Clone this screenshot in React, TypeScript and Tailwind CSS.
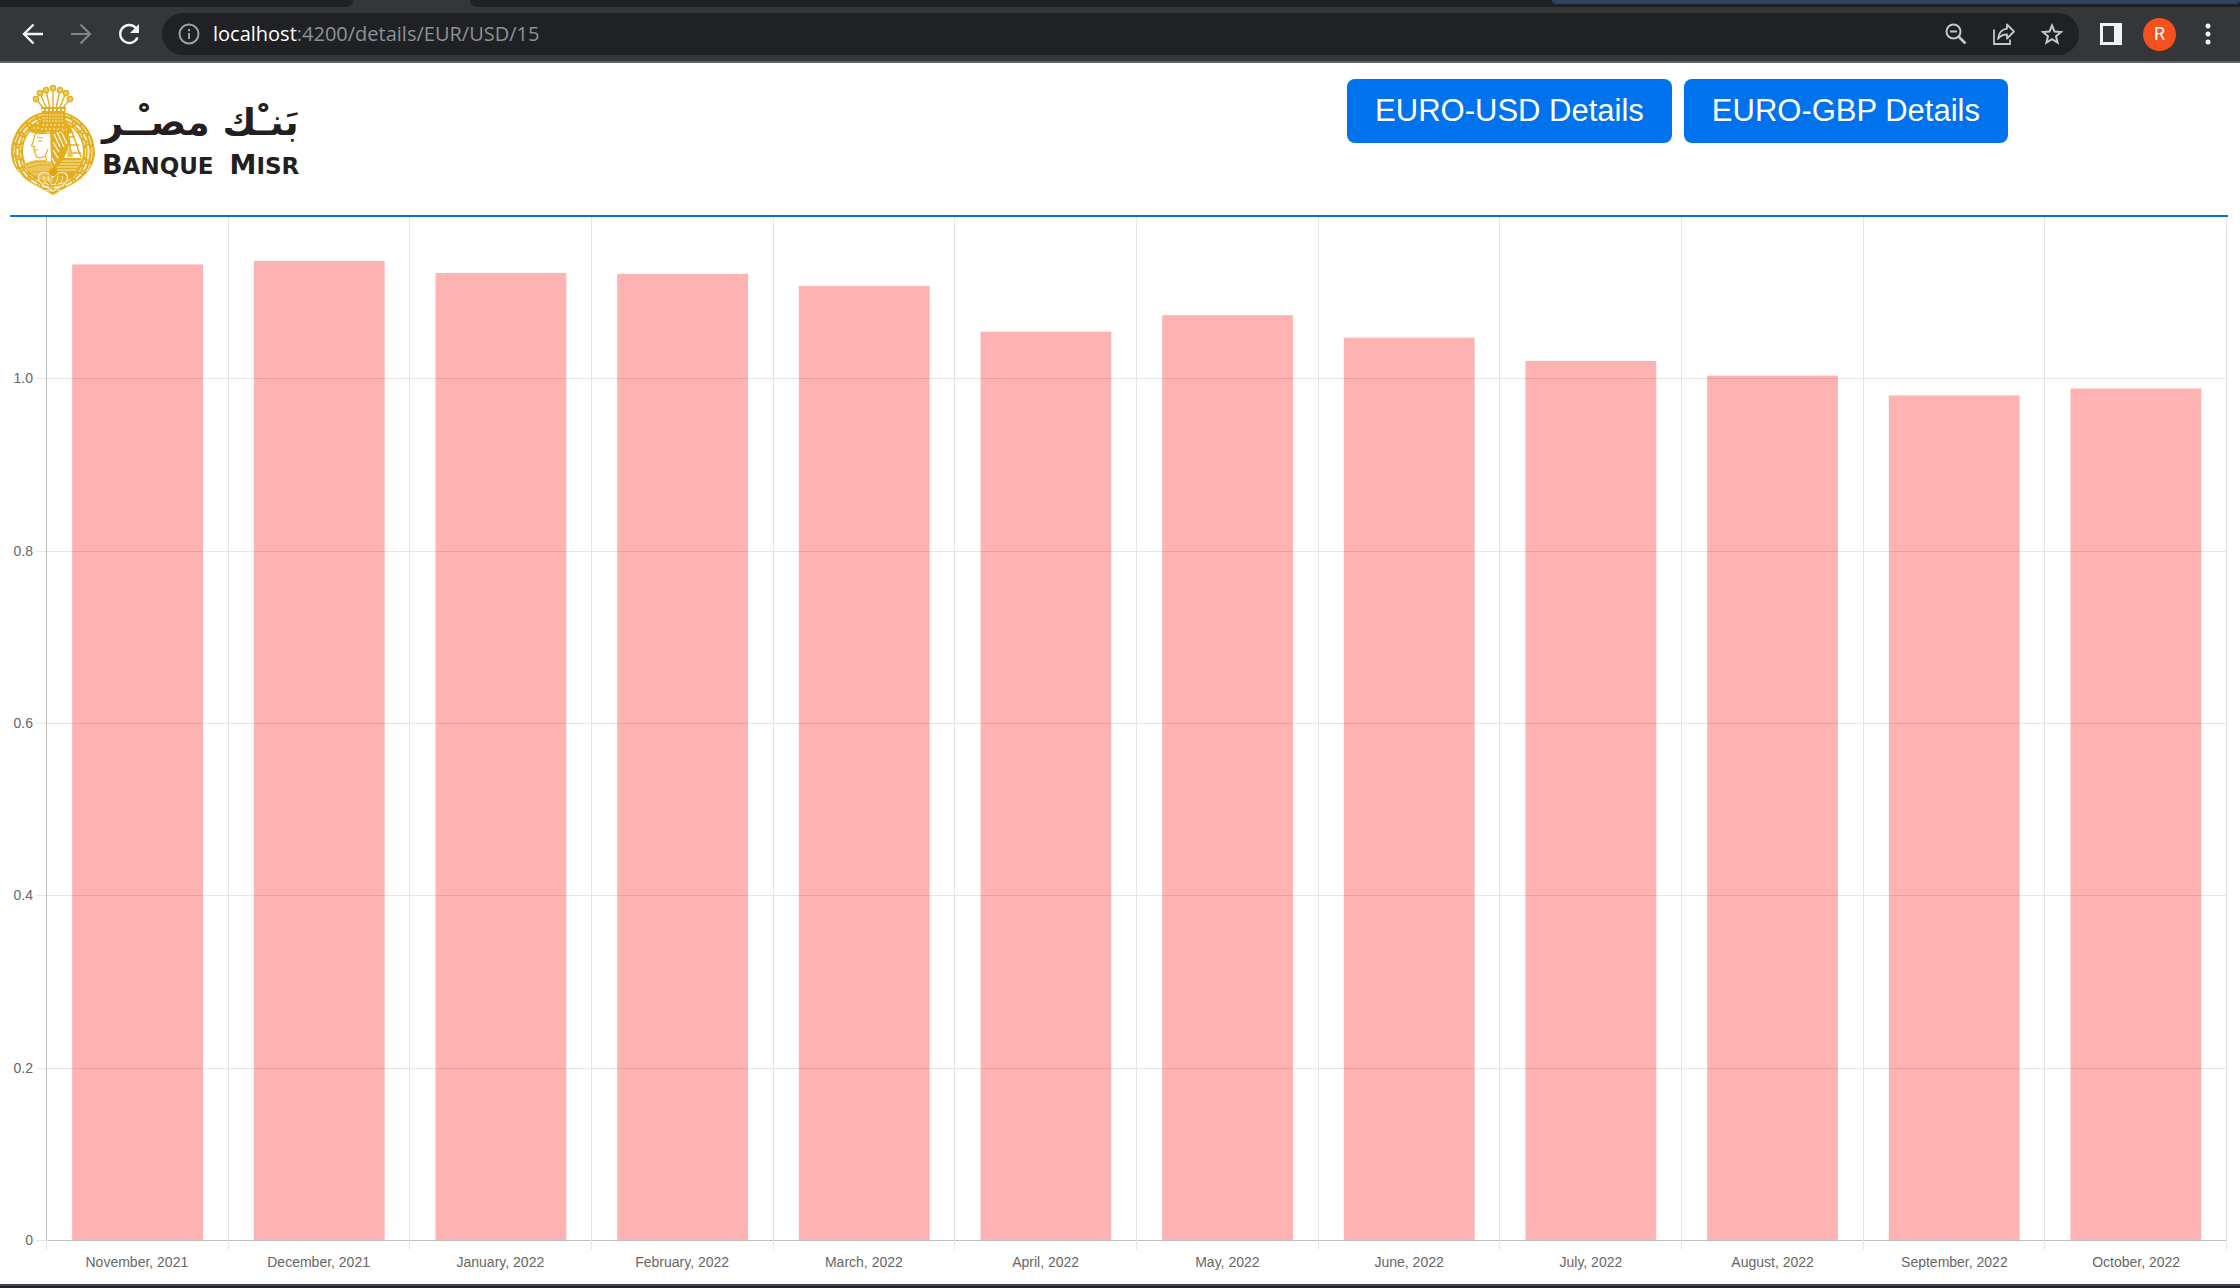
import { ReactNode } from "react";

const rates = [
  { month: "November, 2021", value: 1.132 },
  { month: "December, 2021", value: 1.136 },
  { month: "January, 2022", value: 1.122 },
  { month: "February, 2022", value: 1.121 },
  { month: "March, 2022", value: 1.107 },
  { month: "April, 2022", value: 1.054 },
  { month: "May, 2022", value: 1.073 },
  { month: "June, 2022", value: 1.047 },
  { month: "July, 2022", value: 1.02 },
  { month: "August, 2022", value: 1.003 },
  { month: "September, 2022", value: 0.98 },
  { month: "October, 2022", value: 0.988 },
];

const ticks = ["0", "0.2", "0.4", "0.6", "0.8", "1.0"];
const MAX = 1.187;
const SLOT = 100 / rates.length;

const yOf = (v: number) => `${(1 - v / MAX) * 100}%`;

function IconButton({ label, children }: { label: string; children: ReactNode }) {
  return (
    <button type="button" aria-label={label} className="flex h-8 w-8 shrink-0 items-center justify-center">
      {children}
    </button>
  );
}

function TabStrip() {
  return (
    <div className="flex h-[7px] bg-[#35363a]">
      <div className="w-[353px] rounded-br-lg bg-[#202124]" />
      <div className="w-[117px]" />
      <div className="flex flex-1 justify-end rounded-bl-lg bg-[#202124]">
        <div className="h-1 w-[688px] rounded-b bg-[#2c4361]" />
      </div>
    </div>
  );
}

function Toolbar() {
  return (
    <div className="flex h-14 items-center border-b-2 border-[#5f6064] bg-[#35363a] pl-[17px] pr-4">
      <div className="flex gap-4">
        <IconButton label="Back">
          <svg width="22" height="22" viewBox="0 0 22 22" fill="none" stroke="#f1f3f4" strokeWidth="2.4">
            <path d="M21 11H2.5M11.5 1.5 2 11l9.500 9.500" />
          </svg>
        </IconButton>
        <IconButton label="Forward">
          <svg width="22" height="22" viewBox="0 0 22 22" fill="none" stroke="#828387" strokeWidth="2.200">
            <path d="M1 11h18.500M10.500 1.500 20 11l-9.500 9.500" />
          </svg>
        </IconButton>
        <IconButton label="Reload">
          <svg width="24" height="24" viewBox="0 0 24 24" fill="none">
            <path d="M20.500 15.500A9 9 0 1 1 19 6" stroke="#f1f3f4" strokeWidth="2.400" />
            <path d="M22 2v9h-9z" fill="#f1f3f4" />
          </svg>
        </IconButton>
      </div>
      <div className="ml-[17px] flex h-[42px] flex-1 items-center rounded-full bg-[#202124] pl-4 pr-[11px]">
        <svg width="22" height="22" viewBox="0 0 22 22" fill="none" stroke="#9aa0a6" strokeWidth="2" className="shrink-0">
          <circle cx="11" cy="11" r="9.500" />
          <path d="M11 10v6M11 6v2.200" />
        </svg>
        <div className="ml-[13px] flex-1 font-['Open_Sans','Noto_Sans',sans-serif] text-[20px] leading-7 text-[#8d9195]">
          <span className="text-white">localhost</span>:4200/details/EUR/USD/15
        </div>
        <div className="flex gap-4">
          <IconButton label="Zoom">
            <svg width="22" height="22" viewBox="0 0 22 22" fill="none" stroke="#c4c6c8" strokeWidth="2">
              <circle cx="8.500" cy="8.500" r="7" />
              <path d="M5 8.500h7" />
              <path d="m13.500 13.500 7 7" strokeWidth="2.600" />
            </svg>
          </IconButton>
          <IconButton label="Share">
            <svg width="24" height="24" viewBox="0 0 24 24" fill="none" stroke="#c4c6c8" strokeWidth="1.800">
              <path d="M2 7.500V22h16v-4.500" />
              <path d="M15 2.500 22 9.500l-7 7v-4c-4 0-7 1.300-9 4.500.5-5.500 3.500-9.500 9-10.300z" strokeLinejoin="round" />
            </svg>
          </IconButton>
          <IconButton label="Bookmark">
            <svg width="24" height="24" viewBox="0 0 24 24" fill="none" stroke="#c4c6c8" strokeWidth="2">
              <path d="m12 3.500 2.500 6 6.500.6-5 4.200 1.600 6.400-5.600-3.500-5.600 3.500L8 14.300l-5-4.200 6.500-.6z" />
            </svg>
          </IconButton>
        </div>
      </div>
      <div className="ml-4 flex gap-4">
        <IconButton label="Side panel">
          <svg width="22" height="22" viewBox="0 0 22 22">
            <path d="M0 0h22v22H0zM3 3v16h11V3z" fill="#f1f3f4" fillRule="evenodd" />
          </svg>
        </IconButton>
        <button type="button" aria-label="Profile" className="flex h-[33px] w-[33px] items-center justify-center rounded-full bg-[#f4511e] font-['Roboto',sans-serif] text-lg leading-none text-white">
          R
        </button>
        <IconButton label="Menu">
          <svg width="6" height="22" viewBox="0 0 6 22" fill="#f1f3f4">
            <circle cx="3" cy="3" r="2.500" />
            <circle cx="3" cy="11" r="2.500" />
            <circle cx="3" cy="19" r="2.500" />
          </svg>
        </IconButton>
      </div>
    </div>
  );
}

const stalks = [
  [25, 14, 33, 24],
  [29, 8, 36, 24],
  [35, 5, 39, 24],
  [42, 3, 42, 24],
  [49, 5, 45, 24],
  [55, 8, 48, 24],
  [59, 14, 51, 24],
];

function Emblem() {
  return (
    <svg width="84" height="110" viewBox="0 0 84 110" className="shrink-0" fill="none" stroke="#e3ae1f">
      {stalks.map(([x, y, bx, by]) => (
        <g key={x}>
          <path d={`M${x} ${y}L${bx} ${by}`} strokeWidth="1.400" />
          <circle cx={x} cy={y} r="2.700" fill="#edcb6b" strokeWidth="1.300" />
        </g>
      ))}
      <path d="M42 27C62 24 84 42 84 68C83 84 72 94 58 101L42 110L26 101C12 94 1 84 0 68C0 42 22 24 42 27Z" fill="#e3ae1f" stroke="none" />
      <circle cx="42" cy="67" r="39" stroke="#fbf0cf" strokeWidth="1" strokeDasharray="9 3" />
      <circle cx="42" cy="67" r="35.500" stroke="#fbf0cf" strokeWidth="2" strokeDasharray="7 2 1 2" />
      <circle cx="42" cy="67" r="32.500" stroke="#fbf0cf" strokeWidth="1" strokeDasharray="5 3" />
      <circle cx="42" cy="66" r="30" fill="#fff" stroke="none" />
      <path d="M24 49q-1 5-1.500 7L20.500 61l3 1-.5 2.500 1 1.200-.8 1.300 1.500 2q0 3 2 3.500 4 .5 8-1.500l1 6h5V48z" fill="#fff" strokeWidth="1.200" />
      <path d="M26 53q3-1.500 6 0M27 56h4M24 65h3M34 70q2-2 3-6" strokeWidth="1.100" />
      <path d="M13 79q12-6 21-4l4 2h4v20Q20 94 13 79z" fill="#ecc75c" stroke="none" />
      <path d="M15 80q10-5 20-3M17 83q10-4 24-3M20 87h21M24 91h17" strokeWidth="1" />
      <path d="M42 73h28q1 4-2 8-7 14-26 16z" fill="#e3ae1f" stroke="none" />
      <path d="M44 76h26M44 79h25M44 82h23M46 85h19" stroke="#f7e6b5" strokeWidth="1" />
      <path d="M39 42h14q5 6 6 15-4 18-16 28l-3-9z" fill="#e3ae1f" stroke="none" />
      <path d="M43 49l6 13M46 47l7 15M50 46l6 13M42 57l6 10M42 65l5 8M41 73l3 6" stroke="#fff" strokeWidth="1.200" />
      <path d="M56 44l5 28M60 44l10 28M58 60h10M60 68h10M57 52h7" strokeWidth="1.500" />
      <path d="M58 60l4 12h-6z" fill="#ecc75c" stroke="none" />
      <path d="M18 43q3-4 9-4l4-5h22l7 8 1 6-6 2q-9-6-18-3-8 3-15 1-5-1-4-5z" fill="#e3ae1f" stroke="none" />
      <path d="M22 43h7M31 40h22M30 44h24M48 48l8-4" stroke="#fbf0cf" strokeWidth="1" strokeDasharray="2 2" />
      <path d="M30 22h25l-2 15H32z" fill="#e3ae1f" stroke="none" />
      <path d="M31 25h23" stroke="#fff" strokeWidth="2" strokeDasharray="2 2" />
      <path d="M32 30h21M32 33h21M32 36h21" stroke="#f7e6b5" strokeWidth="1" strokeDasharray="2 1" />
      <path d="M30 88q-6 5 2 12l10 6 10-6q8-7 2-12-6-2-12 4-6-6-12-4z" stroke="#fbf0cf" strokeWidth="1.200" />
      <path d="M33 91q-2 5 5 9M51 91q2 5-5 9M37 91q0 5 4 9M47 91q0 5-4 9" stroke="#fbf0cf" strokeWidth="1" />
      <circle cx="42" cy="87" r="4" fill="#dca514" stroke="none" />
    </svg>
  );
}

function Logo() {
  return (
    <a href="#home" aria-label="Banque Misr" className="flex items-start gap-[7px]">
      <Emblem />
      <div className="flex flex-col pt-2 font-['DejaVu_Sans',sans-serif] font-bold text-[#231f20]">
        <div lang="ar" dir="rtl" className="h-14 self-start whitespace-nowrap text-[37px] leading-[60px]">
          بَنـْك مصـْـر
        </div>
        <div className="flex items-baseline gap-4 text-[23px] leading-8">
          <span><span className="text-[27px]">B</span>ANQUE</span>
          <span><span className="text-[27px]">M</span>ISR</span>
        </div>
      </div>
    </a>
  );
}

function Header() {
  return (
    <header className="ml-[10px] mr-3 flex h-[154px] justify-between border-b-2 border-[#0072ed] pt-4">
      <div className="pt-1.5 pl-px">
        <Logo />
      </div>
      <nav className="mr-[220px] flex items-start gap-3">
        {["EURO-USD Details", "EURO-GBP Details"].map((t) => (
          <button key={t} type="button" className="h-16 rounded-lg bg-[#0072ed] px-7 text-[31px] leading-[64px] text-white">
            {t}
          </button>
        ))}
      </nav>
    </header>
  );
}

function RateChart() {
  return (
    <main className="flex flex-1 flex-col pl-[10px] pr-[13px] text-sm leading-5 text-[#666]">
      <svg role="img" aria-label="Monthly rates" className="ml-[36px] block min-h-80 w-[calc(100%-37px)] flex-1 overflow-visible">
        {ticks.map((t) => (
          <g key={t}>
            <svg x="-10" y={yOf(Number(t))} overflow="visible">
              <rect width="10" height="1" fill="#e5e5e5" shapeRendering="crispEdges" />
              <text x="-3" y="5" textAnchor="end" fill="#666">{t}</text>
            </svg>
            <rect x="0" y={yOf(Number(t))} width="100%" height="1" fill={t === "0" ? "#bfbfbf" : "#e5e5e5"} shapeRendering="crispEdges" />
          </g>
        ))}
        {[...rates, null].map((_, i) => (
          <g key={i} fill={i === 0 ? "#bfbfbf" : "#e5e5e5"} shapeRendering="crispEdges">
            <rect x={`${i * SLOT}%`} y="0" width="1" height="100%" />
            <svg x={`${i * SLOT}%`} y="100%" overflow="visible">
              <rect width="1" height="10" fill="#e5e5e5" />
            </svg>
          </g>
        ))}
        {rates.map((r, i) => (
          <rect
            key={r.month}
            x={`${(i + 0.144) * SLOT}%`}
            y={yOf(r.value)}
            width={`${SLOT * 0.72}%`}
            height={`${(r.value / MAX) * 100}%`}
            fill="#ff0000"
            fillOpacity="0.3"
          />
        ))}
      </svg>
      <div className="ml-[36px] grid grid-cols-12 pt-3 pb-3 text-center">
        {rates.map((r) => (
          <span key={r.month}>{r.month}</span>
        ))}
      </div>
    </main>
  );
}

export default function App() {
  return (
    <div className="flex min-h-screen flex-col bg-white font-['Liberation_Sans',Arial,sans-serif]">
      <TabStrip />
      <Toolbar />
      <Header />
      <RateChart />
      <div className="h-1 border-t-2 border-[#3f4246] bg-[#22222e]" />
    </div>
  );
}
